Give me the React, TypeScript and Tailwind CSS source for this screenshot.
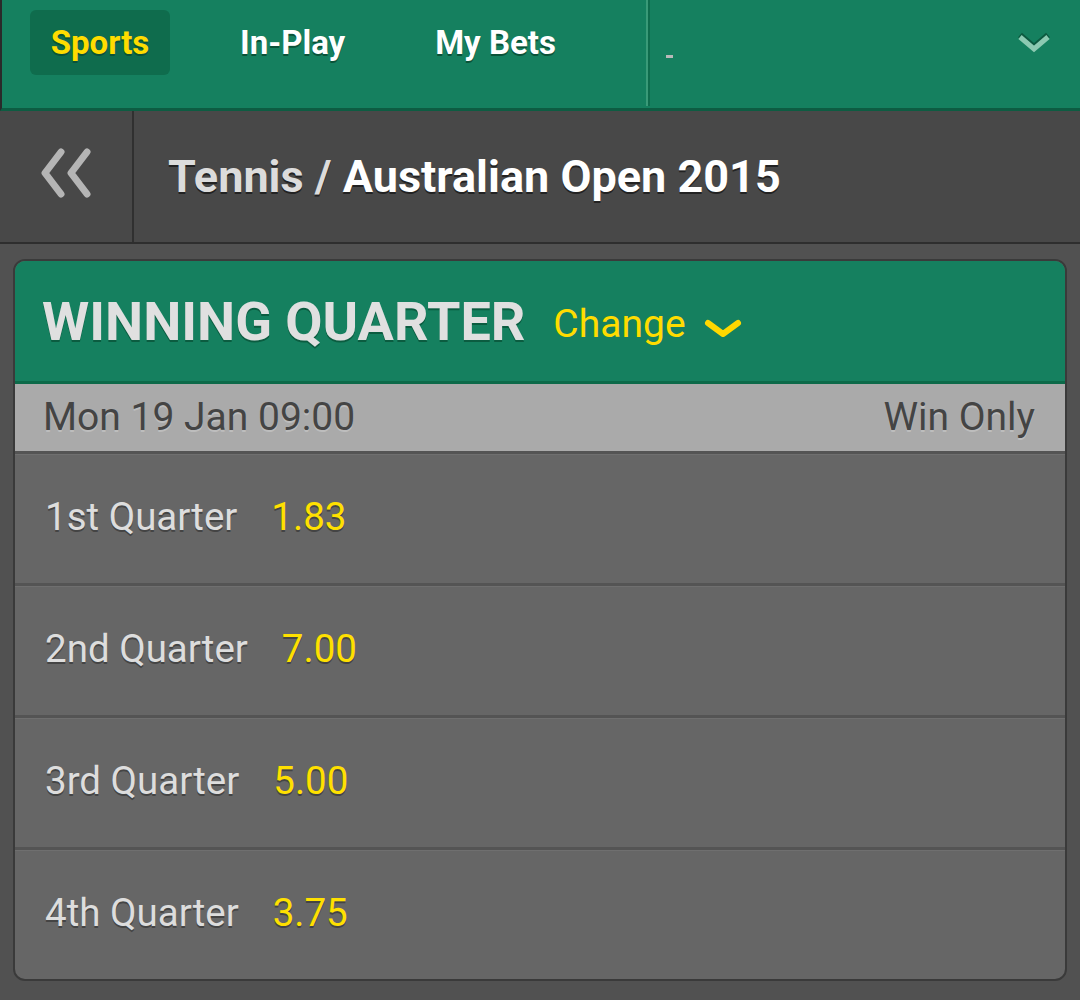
import React from "react";

const rows = [
  { name: "1st Quarter", odds: "1.83" },
  { name: "2nd Quarter", odds: "7.00" },
  { name: "3rd Quarter", odds: "5.00" },
  { name: "4th Quarter", odds: "3.75" },
];

function DoubleChevron() {
  return (
    <svg width="58" height="50" viewBox="0 0 58 50" fill="none">
      <path d="M24 4 L8 25 L24 46" stroke="#b5b5b5" strokeWidth="7" strokeLinejoin="round" strokeLinecap="round" />
      <path d="M50 4 L34 25 L50 46" stroke="#b5b5b5" strokeWidth="7" strokeLinejoin="round" strokeLinecap="round" />
    </svg>
  );
}

export default function App() {
  return (
    <div className="w-[1080px] h-[1000px] bg-[#515151] font-['Roboto',sans-serif] overflow-hidden">
      {/* top nav */}
      <nav className="flex h-[111px] items-start bg-[#15805f] border-b-[3px] border-[#0d5c42] border-l-2 border-l-[#2a2a2a]">
        <div className="flex items-center h-[75px] pt-[10px] pl-[28px]">
          <span className="flex h-[65px] w-[140px] items-center justify-center rounded-[6px] bg-[#0f6c4d] text-[33px] font-bold text-[#ffdc00] [text-shadow:0_2px_0_#0a5238]">
            Sports
          </span>
          <span className="ml-[70px] text-[33px] font-bold text-white [text-shadow:0_2px_0_#0a5238]">In-Play</span>
          <span className="ml-[90px] text-[33px] font-bold text-white [text-shadow:0_2px_0_#0a5238]">My Bets</span>
        </div>
        <div className="ml-[90px] flex h-[106px] flex-1 items-start">
          <div className="h-full w-[4px] border-l-2 border-[#3a9a78] bg-[#0f6c4d]" />
          <div className="mt-[55px] ml-[16px] h-[3px] w-[7px] bg-[#b9b9b9]" />
          <div className="ml-auto mr-[28px] mt-[30px]">
            <svg width="36" height="24" viewBox="0 0 36 24">
              <path d="M4 6 L18 18 L32 6" stroke="#0c5a40" strokeWidth="6" fill="none" transform="translate(0,-1)" />
              <path d="M4 7 L18 19 L32 7" stroke="#8ccab2" strokeWidth="5" fill="none" />
            </svg>
          </div>
        </div>
      </nav>

      {/* breadcrumb */}
      <div className="flex h-[133px] bg-[#484848] border-b-2 border-[#2e2e2e]">
        <div className="flex w-[134px] items-center justify-center border-r-2 border-[#303030] pb-[8px]">
          <DoubleChevron />
        </div>
        <div className="flex items-center pl-[34px] text-[45px] font-bold [text-shadow:0_2px_0_#222]">
          <span className="text-[#dcdcdc]">Tennis /&nbsp;</span>
          <span className="text-white">Australian Open 2015</span>
        </div>
      </div>

      {/* card */}
      <div className="mx-[13px] mt-[15px] overflow-hidden rounded-[12px] border-2 border-[#3a3a3a] bg-[#666]">
        <div className="flex h-[123px] items-center bg-[#15805f] border-b-[3px] border-[#0c6a49] pl-[27px]">
          <span className="text-[54px] font-bold text-[#e0e0e0] [text-shadow:0_2px_0_#0b5c40]">WINNING QUARTER</span>
          <span className="ml-[28px] mt-[6px] text-[39px] text-[#ffdc00]">Change</span>
          <svg className="ml-[18px] mt-[16px]" width="38" height="22" viewBox="0 0 38 22">
            <path d="M4 5 L19 16 L34 5" stroke="#ffd800" strokeWidth="6" fill="none" strokeLinecap="round" strokeLinejoin="round" />
          </svg>
        </div>
        <div className="flex h-[67px] items-center justify-between bg-[#aaaaaa] pl-[28px] pr-[30px] text-[39px] text-[#444] [text-shadow:0_2px_0_#bdbdbd]">
          <span>Mon 19 Jan 09:00</span>
          <span>Win Only</span>
        </div>
        {rows.map((r) => (
          <div
            key={r.name}
            className="flex h-[132px] items-center border-t-[3px] border-[#545454] pl-[30px] pb-[4px] shadow-[inset_0_1px_0_#6f6f6f] text-[38.5px] [text-shadow:0_2px_0_#444]"
          >
            <span className="text-[#dddddd]">{r.name}</span>
            <span className="ml-[34px] text-[#ffe000]">{r.odds}</span>
          </div>
        ))}
      </div>
    </div>
  );
}
